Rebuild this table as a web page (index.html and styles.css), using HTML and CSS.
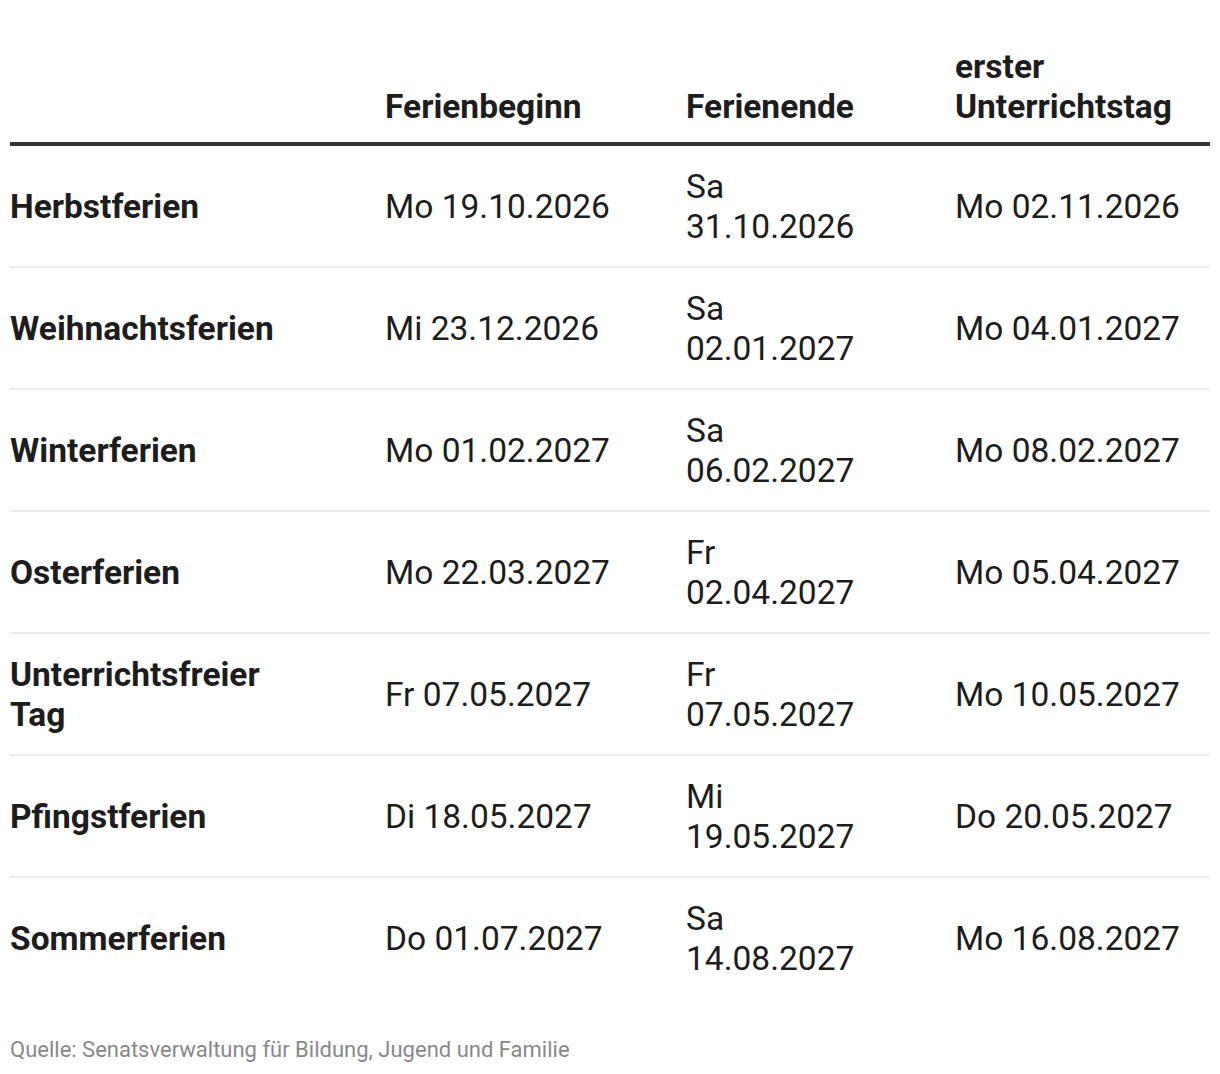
FILE: index.html
```html
<!DOCTYPE html>
<html lang="de">
<head>
<meta charset="utf-8">
<title>Ferien Berlin 2026/2027</title>
<link rel="stylesheet" href="styles.css">
</head>
<body>
<div class="page">
  <table class="holidays">
    <colgroup>
      <col class="c1"><col class="c2"><col class="c3"><col class="c4">
    </colgroup>
    <thead>
      <tr>
        <th></th>
        <th>Ferienbeginn</th>
        <th>Ferienende</th>
        <th>erster<br>Unterrichtstag</th>
      </tr>
    </thead>
    <tbody>
      <tr><th>Herbstferien</th><td>Mo 19.10.2026</td><td>Sa<br>31.10.2026</td><td>Mo 02.11.2026</td></tr>
      <tr><th>Weihnachtsferien</th><td>Mi 23.12.2026</td><td>Sa<br>02.01.2027</td><td>Mo 04.01.2027</td></tr>
      <tr><th>Winterferien</th><td>Mo 01.02.2027</td><td>Sa<br>06.02.2027</td><td>Mo 08.02.2027</td></tr>
      <tr><th>Osterferien</th><td>Mo 22.03.2027</td><td>Fr<br>02.04.2027</td><td>Mo 05.04.2027</td></tr>
      <tr><th>Unterrichtsfreier<br>Tag</th><td>Fr 07.05.2027</td><td>Fr<br>07.05.2027</td><td>Mo 10.05.2027</td></tr>
      <tr><th>Pfingstferien</th><td>Di 18.05.2027</td><td>Mi<br>19.05.2027</td><td>Do 20.05.2027</td></tr>
      <tr><th>Sommerferien</th><td>Do 01.07.2027</td><td>Sa<br>14.08.2027</td><td>Mo 16.08.2027</td></tr>
    </tbody>
  </table>
  <p class="source">Quelle: Senatsverwaltung für Bildung, Jugend und Familie</p>
</div>
</body>
</html>
```

FILE: styles.css
```css
html, body {
  margin: 0;
  padding: 0;
  background: #fff;
}

.page {
  padding: 46px 10px 0 10px;
  font-family: Roboto, "Noto Sans", sans-serif;
  color: #1d1d1d;
}

.holidays {
  width: 1200px;
  table-layout: fixed;
  border-collapse: collapse;
  font-size: 33.5px;
  line-height: 40px;
}

.c1 { width: 375px; }
.c2 { width: 301px; }
.c3 { width: 269px; }
.c4 { width: 255px; }

.holidays th,
.holidays td {
  padding: 0;
  text-align: left;
}

.holidays thead th {
  font-weight: 700;
  vertical-align: bottom;
  padding-top: 1px;
  padding-bottom: 15px;
  border-bottom: 4px solid #333;
}

.holidays tbody th,
.holidays tbody td {
  height: 119px;
  padding-top: 1px;
  vertical-align: middle;
  border-bottom: 2px solid #ececec;
}

.holidays tbody th {
  font-weight: 700;
}

.holidays tbody td {
  font-weight: 400;
}

.holidays tbody tr:last-child th,
.holidays tbody tr:last-child td {
  border-bottom: none;
}

.source {
  margin: 40px 0 0 0;
  font-size: 22px;
  line-height: 24px;
  color: #888;
}
```
